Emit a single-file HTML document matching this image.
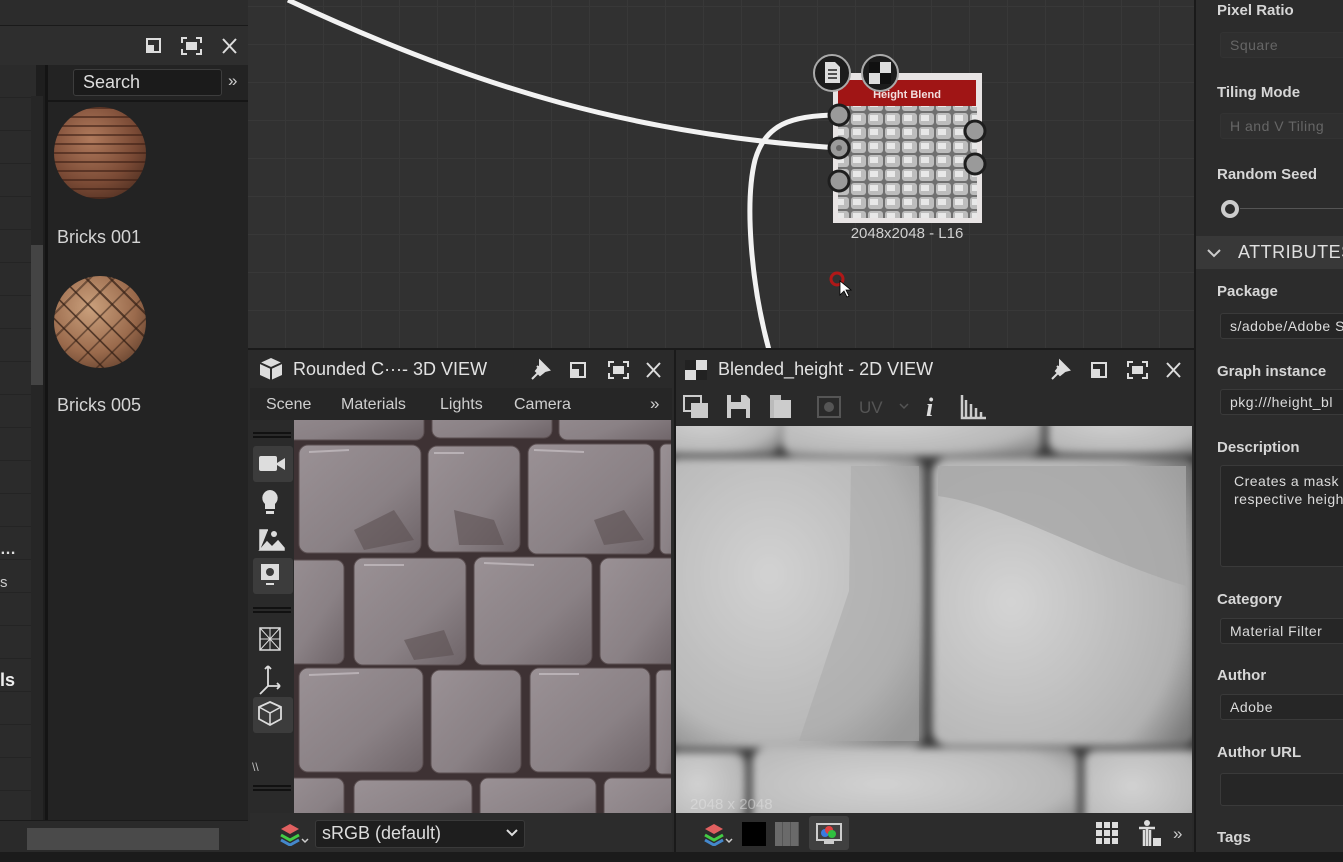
<!DOCTYPE html>
<html><head><meta charset="utf-8"><style>
*{margin:0;padding:0;box-sizing:border-box}
body{width:1343px;height:862px;overflow:hidden;background:#1e1e1e;font-family:"Liberation Sans",sans-serif;color:#d8d8d8;position:relative}
.a{position:absolute}
.t{position:absolute;white-space:nowrap}
.lbl{position:absolute;left:22px;font-size:15px;font-weight:bold;color:#d6d6d6}
.fld{position:absolute;left:26px;width:140px;height:26px;background:#262626;border:1px solid #3a3a3a;border-radius:3px;font-size:14px;color:#dcdcdc;padding:4px 0 0 9px;white-space:nowrap;overflow:hidden;letter-spacing:.5px}
</style></head><body>

<!-- LEFT PANEL -->
<div class="a" style="left:0;top:0;width:248px;height:30px;background:#2c2c2c"></div>
<div class="a" style="left:0;top:25px;width:248px;height:40px;background:#2e2e2e;border-top:1px solid #1a1a1a"></div>
<svg class="a" style="left:140px;top:34px" width="105" height="24" viewBox="0 0 105 24">
 <rect x="7" y="5" width="13" height="13" fill="none" stroke="#ddd" stroke-width="2"/><rect x="7" y="11" width="7" height="7" fill="#ddd"/>
 <path d="M42 9V4h5M56 4h5v5M61 15v5h-5M47 20h-5v-5" fill="none" stroke="#ddd" stroke-width="2"/><rect x="46" y="8" width="11" height="8" fill="#ddd"/>
 <path d="M83 5l13 14M96 5L83 19" stroke="#ddd" stroke-width="2"/>
</svg>
<div class="a" style="left:0;top:65px;width:36px;height:755px;background:#2b2b2b;background-image:repeating-linear-gradient(#2b2b2b 0 32px,#242424 32px 33px)"></div>
<div class="a" style="left:31px;top:96px;width:12px;height:724px;background:#262626"></div>
<div class="a" style="left:31px;top:245px;width:12px;height:140px;background:#444"></div>
<div class="a" style="left:45px;top:65px;width:3px;height:755px;background:#141414"></div>
<div class="a" style="left:48px;top:65px;width:200px;height:755px;background:#232323"></div>
<div class="a" style="left:48px;top:100px;width:200px;height:2px;background:#161616"></div>
<div class="a" style="left:73px;top:69px;width:149px;height:27px;background:#1b1b1b;border:1px solid #3d3d3d;border-radius:3px;font-size:18px;color:#ddd;padding:2px 0 0 9px">Search</div>
<div class="t" style="left:228px;top:71px;font-size:17px;color:#ccc">»</div>
<div class="a" style="left:54px;top:107px;width:92px;height:92px;border-radius:50%;background-image:repeating-linear-gradient(0deg,rgba(60,30,20,.6) 0 2px,transparent 2px 9px),radial-gradient(circle at 40% 35%,#b07a5c,#7a4a35 55%,#3a2218)"></div>
<div class="t" style="left:57px;top:227px;font-size:18px;color:#d4d4d4">Bricks 001</div>
<div class="a" style="left:54px;top:276px;width:92px;height:92px;border-radius:50%;background-image:repeating-linear-gradient(45deg,rgba(50,30,20,.7) 0 2px,transparent 2px 17px),repeating-linear-gradient(-45deg,rgba(50,30,20,.5) 0 2px,transparent 2px 17px),radial-gradient(circle at 40% 35%,#caa07c,#9a6a4c 55%,#4a2e20)"></div>
<div class="t" style="left:57px;top:395px;font-size:18px;color:#d4d4d4">Bricks 005</div>
<div class="t" style="left:0;top:541px;font-size:16px;color:#ddd;font-weight:bold">…</div>
<div class="t" style="left:0;top:574px;font-size:15px;color:#ccc">s</div>
<div class="t" style="left:0;top:670px;font-size:18px;color:#eee;font-weight:bold">ls</div>
<div class="a" style="left:0;top:820px;width:248px;height:32px;background:#2a2a2a;border-top:1px solid #1a1a1a"></div>
<div class="a" style="left:27px;top:828px;width:192px;height:22px;background:#4a4a4a"></div>

<!-- NODE GRAPH -->
<div class="a" style="left:248px;top:0;width:946px;height:348px;background:#313131;background-image:repeating-linear-gradient(90deg,transparent 0 37px,#383838 37px 38px),repeating-linear-gradient(0deg,transparent 0 37px,#383838 37px 38px)"></div>
<svg class="a" style="left:0;top:0" width="1194" height="350" viewBox="0 0 1194 350">
 <path d="M288 0 C480 90 640 135 839 148" fill="none" stroke="#f2f2f2" stroke-width="5"/>
 <path d="M769 350 C750 280 745 200 755 160 C765 125 790 115 839 115" fill="none" stroke="#f2f2f2" stroke-width="5"/>
 <rect x="833" y="73" width="149" height="150" fill="#e8e4e4"/>
 <rect x="838" y="80" width="138" height="26" fill="#a01515"/>
 <text x="907" y="98" font-family="Liberation Sans" font-size="11" font-weight="bold" fill="#f2dede" text-anchor="middle">Height Blend</text>
 <defs><pattern id="st" width="17" height="14" patternUnits="userSpaceOnUse"><rect width="17" height="14" fill="#707070"/><rect x="1" y="1" width="15" height="12" rx="3" fill="#bdbdbd"/><rect x="3" y="3" width="8" height="6" fill="#e8e8e8"/></pattern></defs>
 <rect x="838" y="106" width="139" height="112" fill="url(#st)"/>
 <g fill="#9a9a9a" stroke="#1e1e1e" stroke-width="3">
  <circle cx="839" cy="115" r="10"/><circle cx="839" cy="148" r="10"/><circle cx="839" cy="181" r="10"/>
  <circle cx="975" cy="131" r="10"/><circle cx="975" cy="164" r="10"/></g>
 <circle cx="839" cy="148" r="3" fill="#666"/>
 <circle cx="832" cy="73" r="18" fill="#1c1c1c" stroke="#aaa" stroke-width="2"/>
 <path d="M825 62h10l5 5v16h-15z" fill="#ddd"/><path d="M828 70h9M828 74h9M828 78h9" stroke="#222" stroke-width="1.5"/>
 <circle cx="880" cy="73" r="18" fill="#1c1c1c" stroke="#aaa" stroke-width="2"/>
 <rect x="869" y="62" width="22" height="22" fill="#ddd"/><rect x="869" y="62" width="11" height="11" fill="#111"/><rect x="880" y="73" width="11" height="11" fill="#111"/>
 <text x="907" y="238" font-family="Liberation Sans" font-size="15" fill="#d0d0d0" text-anchor="middle">2048x2048 - L16</text>
 <circle cx="837" cy="279" r="6" fill="none" stroke="#b01818" stroke-width="3"/>
 <path d="M840 281v14l4-4 3 6 2-1-3-6h5z" fill="#fff" stroke="#000" stroke-width=".8"/>
</svg>

<!-- 3D VIEW -->
<div class="a" style="left:248px;top:348px;width:426px;height:504px;background:#2a2a2a;border-top:2px solid #1a1a1a"></div>
<svg class="a" style="left:258px;top:357px" width="26" height="24" viewBox="0 0 26 24"><path d="M13 1l11 5v12l-11 5-11-5V6z" fill="#ddd"/><path d="M2 6l11 5 11-5M13 11v12" stroke="#2a2a2a" stroke-width="2" fill="none"/></svg>
<div class="t" style="left:293px;top:359px;font-size:18px;color:#e2e2e2">Rounded C···- 3D VIEW</div>
<svg class="a" style="left:528px;top:358px" width="140" height="24" viewBox="0 0 140 24">
 <path d="M4 21l7-7M9 8l7 7M12 3l9 9-4 1-5 4-4-4 4-5z" fill="#ddd" stroke="#ddd" stroke-width="2"/>
 <rect x="43" y="5" width="14" height="14" fill="none" stroke="#ddd" stroke-width="2"/><rect x="43" y="11" width="8" height="8" fill="#ddd"/>
 <path d="M81 9V4h5M95 4h5v5M100 15v5h-5M86 20h-5v-5" fill="none" stroke="#ddd" stroke-width="2"/><rect x="85" y="8" width="11" height="8" fill="#ddd"/>
 <path d="M119 5l13 14M132 5l-13 14" stroke="#ddd" stroke-width="2"/>
</svg>
<div class="a" style="left:250px;top:388px;width:422px;height:32px;background:#262626"></div>
<div class="t" style="left:266px;top:396px;font-size:16px;color:#cfcfcf">Scene</div>
<div class="t" style="left:341px;top:396px;font-size:16px;color:#cfcfcf">Materials</div>
<div class="t" style="left:440px;top:396px;font-size:16px;color:#cfcfcf">Lights</div>
<div class="t" style="left:514px;top:396px;font-size:16px;color:#cfcfcf">Camera</div>
<div class="t" style="left:650px;top:394px;font-size:17px;color:#cfcfcf">»</div>
<div class="a" style="left:250px;top:420px;width:44px;height:393px;background:#2a2a2a"></div>
<div class="a" style="left:253px;top:432px;width:38px;height:6px;border-top:2px solid #111;border-bottom:2px solid #111"></div>
<div class="a" style="left:253px;top:446px;width:40px;height:36px;background:#3c3c3c;border-radius:3px"></div>
<div class="a" style="left:253px;top:558px;width:40px;height:36px;background:#3c3c3c;border-radius:3px"></div>
<div class="a" style="left:253px;top:607px;width:38px;height:6px;border-top:2px solid #111;border-bottom:2px solid #111"></div>
<div class="a" style="left:253px;top:697px;width:40px;height:36px;background:#3c3c3c;border-radius:3px"></div>
<div class="a" style="left:253px;top:785px;width:38px;height:6px;border-top:2px solid #111;border-bottom:2px solid #111"></div>
<svg class="a" style="left:256px;top:450px" width="34" height="280" viewBox="0 0 34 280">
 <rect x="3" y="6" width="18" height="15" rx="2" fill="#ddd"/><path d="M21 13l8-5v12l-8-5z" fill="#ddd"/>
 <path d="M14 40a8 8 0 0 0-5 14v5h10v-5a8 8 0 0 0-5-14z" fill="#ddd"/><rect x="10" y="61" width="8" height="3" fill="#ddd"/>
 <path d="M4 100V80h8M4 100l7-8 5 5 6-6 6 7v2z" fill="#ddd" stroke="#ddd" stroke-width="1.5"/><circle cx="18" cy="84" r="3" fill="#ddd"/>
 <rect x="5" y="114" width="18" height="16" fill="#ddd"/><circle cx="14" cy="122" r="4" fill="#3c3c3c"/><rect x="10" y="133" width="8" height="2" fill="#ddd"/>
 <rect x="4" y="178" width="20" height="22" fill="none" stroke="#ddd" stroke-width="1.5"/><path d="M4 189h20M14 178v22M4 178l20 22M24 178L4 200" stroke="#ddd" stroke-width="1"/>
 <path d="M12 216v20h12M12 236l-8 8M24 236l-3-3M24 236l-3 3M12 216l-3 3M12 216l3 3" stroke="#ddd" stroke-width="1.8" fill="none"/>
 <path d="M14 252l11 5v12l-11 6-11-6v-12z" fill="none" stroke="#ddd" stroke-width="1.8"/><path d="M3 257l11 6 11-6M14 263v12" stroke="#ddd" stroke-width="1.5" fill="none"/>
</svg>
<div class="t" style="left:252px;top:760px;font-size:12px;color:#bbb">\\</div>
<svg class="a" style="left:294px;top:420px" width="377" height="393" viewBox="0 0 377 393">
 <defs><linearGradient id="sg" x1="0" y1="0" x2="1" y2="1"><stop offset="0" stop-color="#9a9195"/><stop offset=".6" stop-color="#8a8185"/><stop offset="1" stop-color="#6e6468"/></linearGradient></defs>
 <rect width="377" height="393" fill="#3e3234"/>
 <g fill="url(#sg)" stroke="#5a4e50" stroke-width="1">
  <rect x="-20" y="-30" width="150" height="50" rx="8"/><rect x="138" y="-30" width="120" height="48" rx="8"/><rect x="265" y="-30" width="120" height="50" rx="8"/>
  <rect x="5" y="25" width="122" height="108" rx="9"/><rect x="134" y="26" width="92" height="106" rx="9"/><rect x="234" y="24" width="126" height="110" rx="9"/><rect x="366" y="24" width="30" height="110" rx="6"/>
  <rect x="-20" y="140" width="70" height="104" rx="8"/><rect x="60" y="138" width="112" height="107" rx="9"/><rect x="180" y="137" width="118" height="108" rx="9"/><rect x="306" y="138" width="80" height="106" rx="9"/>
  <rect x="5" y="248" width="124" height="104" rx="9"/><rect x="137" y="250" width="90" height="103" rx="9"/><rect x="236" y="248" width="120" height="104" rx="9"/><rect x="362" y="250" width="30" height="104" rx="6"/>
  <rect x="-20" y="358" width="70" height="60" rx="8"/><rect x="60" y="360" width="118" height="60" rx="8"/><rect x="186" y="358" width="116" height="60" rx="8"/><rect x="310" y="358" width="80" height="60" rx="8"/>
 </g>
 <g stroke="#c8c0c4" stroke-width="2" fill="none" opacity=".7"><path d="M15 32l40 -2M140 33l30 0M240 30l50 2M70 145l40 0M190 143l50 2M15 255l50 -2M245 254l40 0"/></g>
 <g fill="#5e5254" opacity=".6"><path d="M60 110l40-20 20 30-50 10z"/><path d="M160 90l40 10 10 25-45 0z"/><path d="M300 100l30 -10 20 30-40 5z"/><path d="M110 220l40-10 10 25-40 5z"/></g>
</svg>
<div class="a" style="left:250px;top:813px;width:422px;height:39px;background:#2c2c2c"></div>
<svg class="a" style="left:279px;top:822px" width="32" height="24" viewBox="0 0 32 24"><path d="M2 7l9-5 9 5-9 5z" fill="#e06060"/><path d="M2 13l9 5 9-5" stroke="#4c4" stroke-width="3" fill="none"/><path d="M2 18l9 5 9-5" stroke="#48c" stroke-width="3" fill="none"/><path d="M23 17l3 3 3-3" stroke="#ccc" stroke-width="1.5" fill="none"/></svg>
<div class="a" style="left:315px;top:820px;width:210px;height:28px;background:#1e1e1e;border:1px solid #3a3a3a;border-radius:3px;font-size:18px;color:#ddd;padding:2px 0 0 6px">sRGB (default)</div>
<svg class="a" style="left:505px;top:827px" width="14" height="12"><path d="M2 3l5 5 5-5" stroke="#ddd" stroke-width="2" fill="none"/></svg>

<!-- 2D VIEW -->
<div class="a" style="left:674px;top:348px;width:520px;height:504px;background:#2a2a2a;border-top:2px solid #1a1a1a;border-left:2px solid #1a1a1a"></div>
<svg class="a" style="left:684px;top:359px" width="24" height="22"><rect x="1" y="1" width="22" height="20" fill="#ddd"/><rect x="1" y="1" width="11" height="10" fill="#222"/><rect x="12" y="11" width="11" height="10" fill="#222"/></svg>
<div class="t" style="left:718px;top:359px;font-size:18px;color:#e2e2e2">Blended_height - 2D VIEW</div>
<svg class="a" style="left:1048px;top:358px" width="140" height="24" viewBox="0 0 140 24">
 <path d="M4 21l7-7M9 8l7 7M12 3l9 9-4 1-5 4-4-4 4-5z" fill="#ddd" stroke="#ddd" stroke-width="2"/>
 <rect x="44" y="5" width="14" height="14" fill="none" stroke="#ddd" stroke-width="2"/><rect x="44" y="11" width="8" height="8" fill="#ddd"/>
 <path d="M80 9V4h5M94 4h5v5M99 15v5h-5M85 20h-5v-5" fill="none" stroke="#ddd" stroke-width="2"/><rect x="84" y="8" width="11" height="8" fill="#ddd"/>
 <path d="M119 5l13 14M132 5l-13 14" stroke="#ddd" stroke-width="2"/>
</svg>
<svg class="a" style="left:682px;top:392px" width="310" height="28" viewBox="0 0 310 28">
 <rect x="2" y="4" width="17" height="15" fill="none" stroke="#ccc" stroke-width="2"/><rect x="9" y="11" width="17" height="15" fill="#ccc"/>
 <path d="M45 3h19l4 4v19H45z" fill="#ccc"/><rect x="49" y="3" width="10" height="7" fill="#2a2a2a"/><rect x="49" y="17" width="15" height="9" fill="#2a2a2a"/>
 <path d="M88 3h11v5h5v18H88z" fill="#bbb"/><rect x="92" y="8" width="17" height="18" fill="#ccc"/>
 <rect x="136" y="5" width="22" height="20" fill="none" stroke="#555" stroke-width="2"/><circle cx="147" cy="15" r="5" fill="#555"/>
 <text x="177" y="21" font-family="Liberation Sans" font-size="17" fill="#555">UV</text><path d="M218 12l4 4 4-4" stroke="#555" stroke-width="1.5" fill="none"/>
 <text x="244" y="24" font-family="Liberation Serif" font-size="26" font-style="italic" font-weight="bold" fill="#ddd">i</text>
 <path d="M280 3v23h24M284 26V8M289 26V12M294 26V16M299 26V20" stroke="#ccc" stroke-width="2.5" fill="none"/>
</svg>
<svg class="a" style="left:676px;top:426px" width="516" height="387" viewBox="0 0 516 387">
 <defs>
  <radialGradient id="g1" cx=".4" cy=".4" r=".75"><stop offset="0" stop-color="#d2d2d2"/><stop offset=".75" stop-color="#b8b8b8"/><stop offset="1" stop-color="#858585"/></radialGradient>
  <radialGradient id="g2" cx=".3" cy=".5" r=".8"><stop offset="0" stop-color="#d4d4d4"/><stop offset=".8" stop-color="#b2b2b2"/><stop offset="1" stop-color="#7a7a7a"/></radialGradient>
  <filter id="bl"><feGaussianBlur stdDeviation="4"/></filter>
 </defs>
 <rect width="516" height="387" fill="#3a3a3a"/>
 <g filter="url(#bl)">
 <rect x="-20" y="-30" width="125" height="58" rx="14" fill="url(#g1)"/>
 <rect x="106" y="-30" width="260" height="60" rx="14" fill="url(#g1)"/>
 <rect x="372" y="-30" width="160" height="58" rx="14" fill="url(#g1)"/>
 <rect x="-10" y="32" width="258" height="290" rx="14" fill="url(#g1)"/>
 <rect x="256" y="32" width="264" height="288" rx="16" fill="url(#g2)"/>
 <rect x="-10" y="326" width="80" height="80" rx="12" fill="url(#g1)"/>
 <rect x="76" y="322" width="326" height="90" rx="14" fill="url(#g1)"/>
 <rect x="408" y="324" width="120" height="90" rx="12" fill="url(#g1)"/>
 </g>
 <path d="M175 40l68 0 0 275-120 0 50-150z" fill="#aaaaaa" opacity=".55"/>
 <path d="M262 70c70 10 150 60 248 90V40H262z" fill="#a8a8a8" opacity=".8"/>
 <text x="14" y="383" font-family="Liberation Sans" font-size="15" fill="#e4e4e4" opacity=".5">2048 x 2048</text>
</svg>
<div class="a" style="left:676px;top:813px;width:516px;height:39px;background:#2c2c2c"></div>
<svg class="a" style="left:703px;top:822px" width="32" height="24" viewBox="0 0 32 24"><path d="M2 7l9-5 9 5-9 5z" fill="#e06060"/><path d="M2 13l9 5 9-5" stroke="#4c4" stroke-width="3" fill="none"/><path d="M2 18l9 5 9-5" stroke="#48c" stroke-width="3" fill="none"/><path d="M23 17l3 3 3-3" stroke="#ccc" stroke-width="1.5" fill="none"/></svg>
<div class="a" style="left:742px;top:822px;width:24px;height:24px;background:#000"></div>
<div class="a" style="left:775px;top:822px;width:24px;height:24px;background:#6a6a6a;background-image:repeating-linear-gradient(90deg,#6a6a6a 0 7px,#555 7px 8px)"></div>
<div class="a" style="left:809px;top:816px;width:40px;height:34px;background:#404040;border-radius:3px"></div>
<svg class="a" style="left:815px;top:822px" width="28" height="24"><rect x="2" y="2" width="24" height="16" fill="none" stroke="#ccc" stroke-width="2"/><rect x="9" y="19" width="10" height="3" fill="#ccc"/><circle cx="10" cy="11" r="4" fill="#3a7be0"/><circle cx="14" cy="8" r="4" fill="#e04040"/><circle cx="17" cy="12" r="4" fill="#30c040"/></svg>
<svg class="a" style="left:1096px;top:822px" width="22" height="22"><g fill="#ddd"><rect x="0" y="0" width="6" height="6"/><rect x="8" y="0" width="6" height="6"/><rect x="16" y="0" width="6" height="6"/><rect x="0" y="8" width="6" height="6"/><rect x="8" y="8" width="6" height="6"/><rect x="16" y="8" width="6" height="6"/><rect x="0" y="16" width="6" height="6"/><rect x="8" y="16" width="6" height="6"/><rect x="16" y="16" width="6" height="6"/></g></svg>
<svg class="a" style="left:1137px;top:820px" width="26" height="28"><circle cx="10" cy="3" r="3" fill="#ddd"/><path d="M2 8h16M10 8v18M7 10v16M13 10v16" stroke="#ddd" stroke-width="2.5"/><rect x="16" y="18" width="8" height="8" fill="#ddd"/></svg>
<div class="t" style="left:1173px;top:824px;font-size:17px;color:#ccc">»</div>

<!-- RIGHT PANEL -->
<div class="a" style="left:1194px;top:0;width:149px;height:852px;background:#2c2c2c;border-left:2px solid #1a1a1a"></div>
<div class="lbl" style="left:1217px;top:2px">Pixel Ratio</div>
<div class="fld" style="left:1220px;top:32px;background:#2f2f2f;border-color:#333;color:#666">Square</div>
<div class="lbl" style="left:1217px;top:84px">Tiling Mode</div>
<div class="fld" style="left:1220px;top:113px;background:#2f2f2f;border-color:#333;color:#666">H and V Tiling</div>
<div class="lbl" style="left:1217px;top:166px">Random Seed</div>
<div class="a" style="left:1221px;top:200px;width:18px;height:18px;border-radius:50%;border:4px solid #ccc"></div>
<div class="a" style="left:1240px;top:208px;width:103px;height:1px;background:#555"></div>
<div class="a" style="left:1196px;top:236px;width:147px;height:33px;background:#383838"></div>
<svg class="a" style="left:1206px;top:247px" width="16" height="12"><path d="M2 3l6 6 6-6" stroke="#ccc" stroke-width="2" fill="none"/></svg>
<div class="t" style="left:1238px;top:242px;font-size:18px;color:#e0e0e0;letter-spacing:.5px">ATTRIBUTES</div>
<div class="lbl" style="left:1217px;top:283px">Package</div>
<div class="fld" style="left:1220px;top:313px">s/adobe/Adobe S</div>
<div class="lbl" style="left:1217px;top:363px">Graph instance</div>
<div class="fld" style="left:1220px;top:389px">pkg:///height_bl</div>
<div class="lbl" style="left:1217px;top:439px">Description</div>
<div class="fld" style="left:1220px;top:465px;height:102px;line-height:18px;padding-top:6px;padding-left:13px">Creates a mask<br>respective heigh</div>
<div class="lbl" style="left:1217px;top:591px">Category</div>
<div class="fld" style="left:1220px;top:618px">Material Filter</div>
<div class="lbl" style="left:1217px;top:667px">Author</div>
<div class="fld" style="left:1220px;top:694px">Adobe</div>
<div class="lbl" style="left:1217px;top:744px">Author URL</div>
<div class="fld" style="left:1220px;top:773px;height:33px"></div>
<div class="lbl" style="left:1217px;top:829px">Tags</div>

<div class="a" style="left:0;top:852px;width:1343px;height:10px;background:#1b1b1b"></div>
</body></html>
